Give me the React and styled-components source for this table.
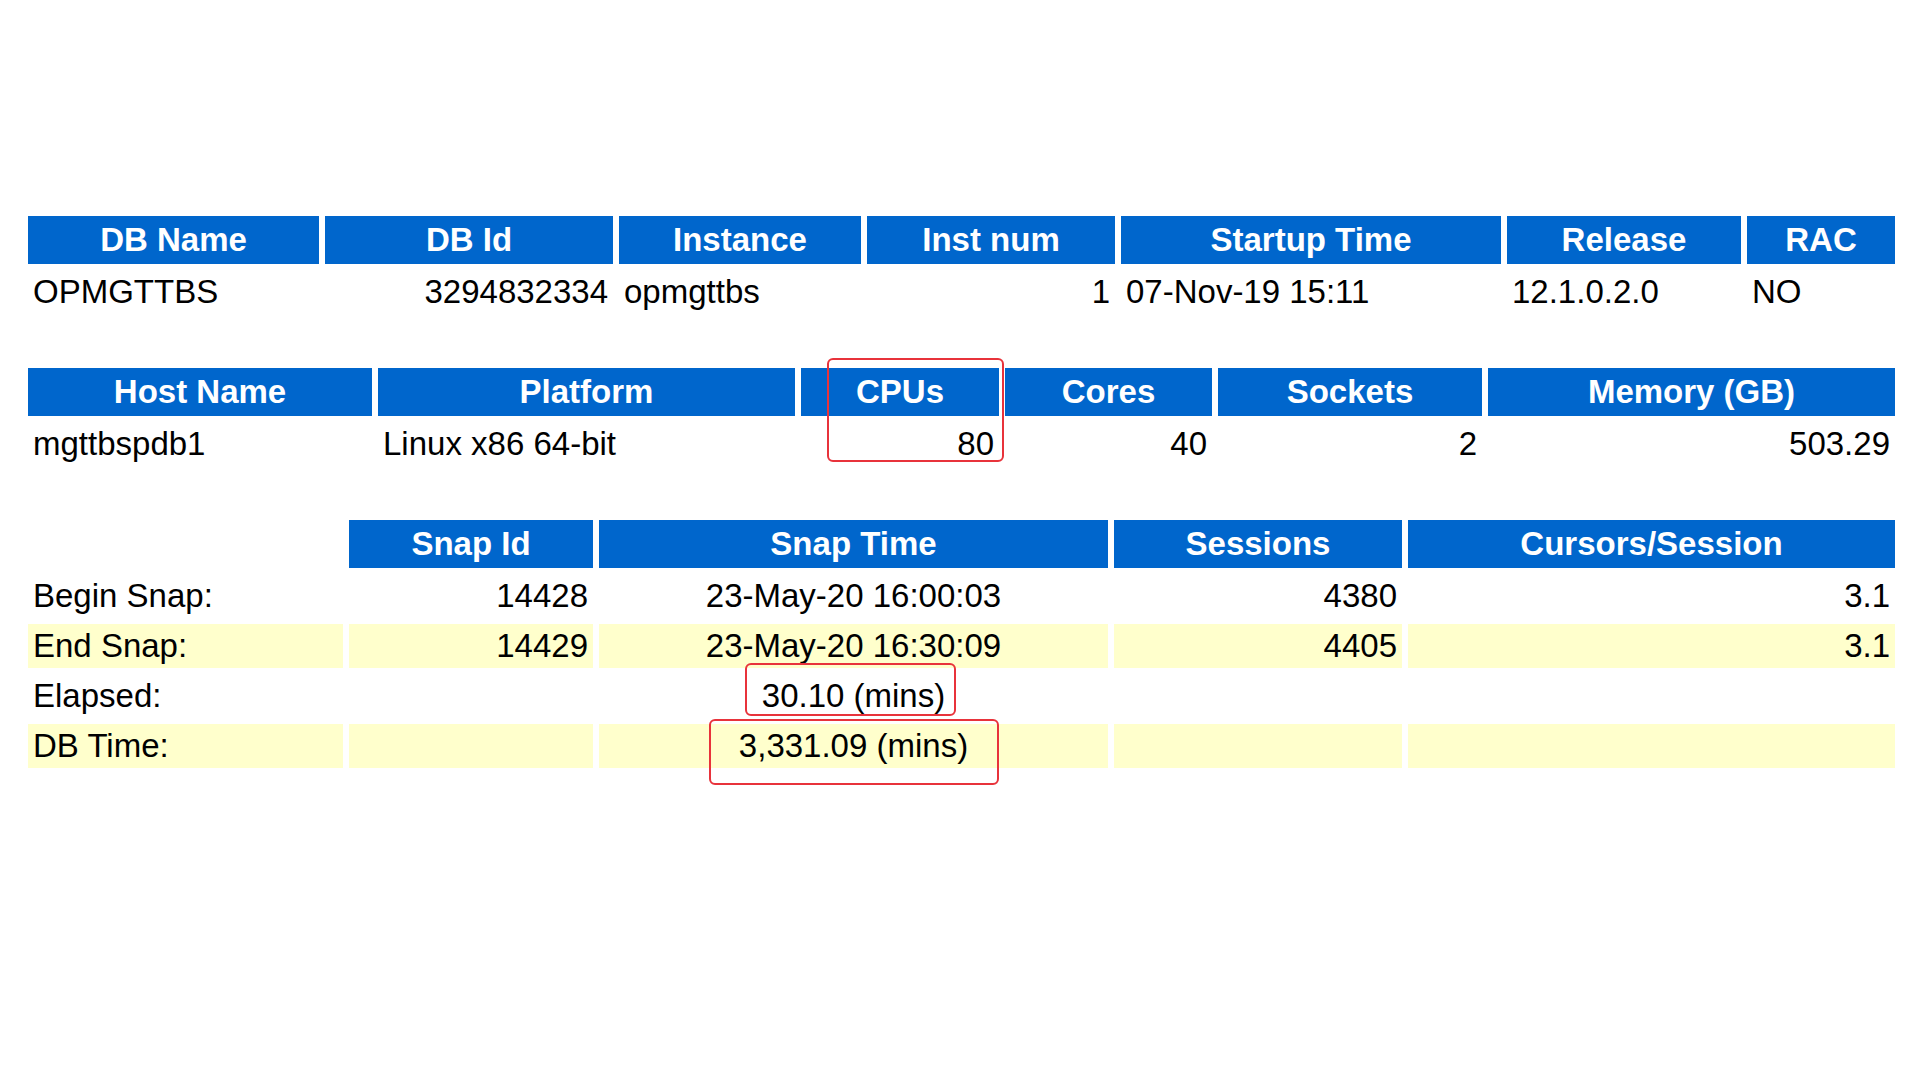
import React from "react";
import styled, { createGlobalStyle } from "styled-components";

const GlobalStyle = createGlobalStyle`
    * {
        box-sizing: border-box;
    }
    body {
        margin: 0;
        background: #fff;
        font-family: "Liberation Sans", Arial, sans-serif;
    }
`;

const BLUE = "#0066cc";
const SHADE = "#ffffcc";

const Page = styled.div`
    padding: 210px 0 0 22px;
    width: 1920px;
    min-height: 1080px;
`;

const Report = styled.table`
    width: 1879px;
    table-layout: fixed;
    border-collapse: separate;
    border-spacing: 6px;
    & + & {
        margin-top: 42px;
    }
`;

const Head = styled.th`
    position: relative;
    height: 48px;
    padding: 0 5px;
    background: ${(p) => (p.$blank ? "transparent" : BLUE)};
    color: #fff;
    font-weight: bold;
    font-size: 33px;
    line-height: 38px;
    text-align: center;
    white-space: nowrap;
`;

const Cell = styled.td`
    position: relative;
    height: 44px;
    padding: 0 5px;
    background: ${(p) => (p.$shade ? SHADE : "transparent")};
    color: #000;
    font-size: 33px;
    line-height: 38px;
    text-align: ${(p) => p.$align || "left"};
    white-space: nowrap;
`;

const Marker = styled.div`
    position: absolute;
    left: ${(p) => p.$left}px;
    top: ${(p) => p.$top}px;
    width: ${(p) => p.$w}px;
    height: ${(p) => p.$h}px;
    border: 2px solid #e8333b;
    border-radius: 6px;
    pointer-events: none;
    z-index: 2;
`;

function Row({ cells, shade }) {
    return (
        <tr>
            {cells.map((c, i) => (
                <Cell key={i} $align={c.align} $shade={shade}>
                    {c.text}
                    {c.marker && <Marker {...c.marker} />}
                </Cell>
            ))}
        </tr>
    );
}

function Table({ cols, heads, rows }) {
    return (
        <Report>
            <colgroup>
                {cols.map((w, i) => (
                    <col key={i} style={{ width: w }} />
                ))}
            </colgroup>
            <thead>
                <tr>
                    {heads.map((h, i) => (
                        <Head key={i} $blank={!h.text}>
                            {h.text}
                            {h.marker && <Marker {...h.marker} />}
                        </Head>
                    ))}
                </tr>
            </thead>
            <tbody>
                {rows.map((r, i) => (
                    <Row key={i} cells={r.cells} shade={r.shade} />
                ))}
            </tbody>
        </Report>
    );
}

const L = (text) => ({ text, align: "left" });
const R = (text) => ({ text, align: "right" });
const C = (text) => ({ text, align: "center" });

const dbTable = {
    cols: [291, 288, 242, 248, 380, 234, 148],
    heads: [
        { text: "DB Name" },
        { text: "DB Id" },
        { text: "Instance" },
        { text: "Inst num" },
        { text: "Startup Time" },
        { text: "Release" },
        { text: "RAC" },
    ],
    rows: [
        {
            cells: [
                L("OPMGTTBS"),
                R("3294832334"),
                L("opmgttbs"),
                R("1"),
                L("07-Nov-19 15:11"),
                L("12.1.0.2.0"),
                L("NO"),
            ],
        },
    ],
};

const hostTable = {
    cols: [344, 417, 198, 207, 264, 407],
    heads: [
        { text: "Host Name" },
        { text: "Platform" },
        { text: "CPUs", marker: { $left: 26, $top: -10, $w: 177, $h: 104 } },
        { text: "Cores" },
        { text: "Sockets" },
        { text: "Memory (GB)" },
    ],
    rows: [
        {
            cells: [
                L("mgttbspdb1"),
                L("Linux x86 64-bit"),
                R("80"),
                R("40"),
                R("2"),
                R("503.29"),
            ],
        },
    ],
};

const snapTable = {
    cols: [315, 244, 509, 288, 487],
    heads: [
        { text: "" },
        { text: "Snap Id" },
        { text: "Snap Time" },
        { text: "Sessions" },
        { text: "Cursors/Session" },
    ],
    rows: [
        {
            cells: [L("Begin Snap:"), R("14428"), C("23-May-20 16:00:03"), R("4380"), R("3.1")],
        },
        {
            shade: true,
            cells: [L("End Snap:"), R("14429"), C("23-May-20 16:30:09"), R("4405"), R("3.1")],
        },
        {
            cells: [
                L("Elapsed:"),
                R(""),
                {
                    text: "30.10 (mins)",
                    align: "center",
                    marker: { $left: 146, $top: -11, $w: 211, $h: 53 },
                },
                R(""),
                R(""),
            ],
        },
        {
            shade: true,
            cells: [
                L("DB Time:"),
                R(""),
                {
                    text: "3,331.09 (mins)",
                    align: "center",
                    marker: { $left: 110, $top: -5, $w: 290, $h: 66 },
                },
                R(""),
                R(""),
            ],
        },
    ],
};

export default function App() {
    return (
        <>
            <GlobalStyle />
            <Page>
                <Table {...dbTable} />
                <Table {...hostTable} />
                <Table {...snapTable} />
            </Page>
        </>
    );
}
